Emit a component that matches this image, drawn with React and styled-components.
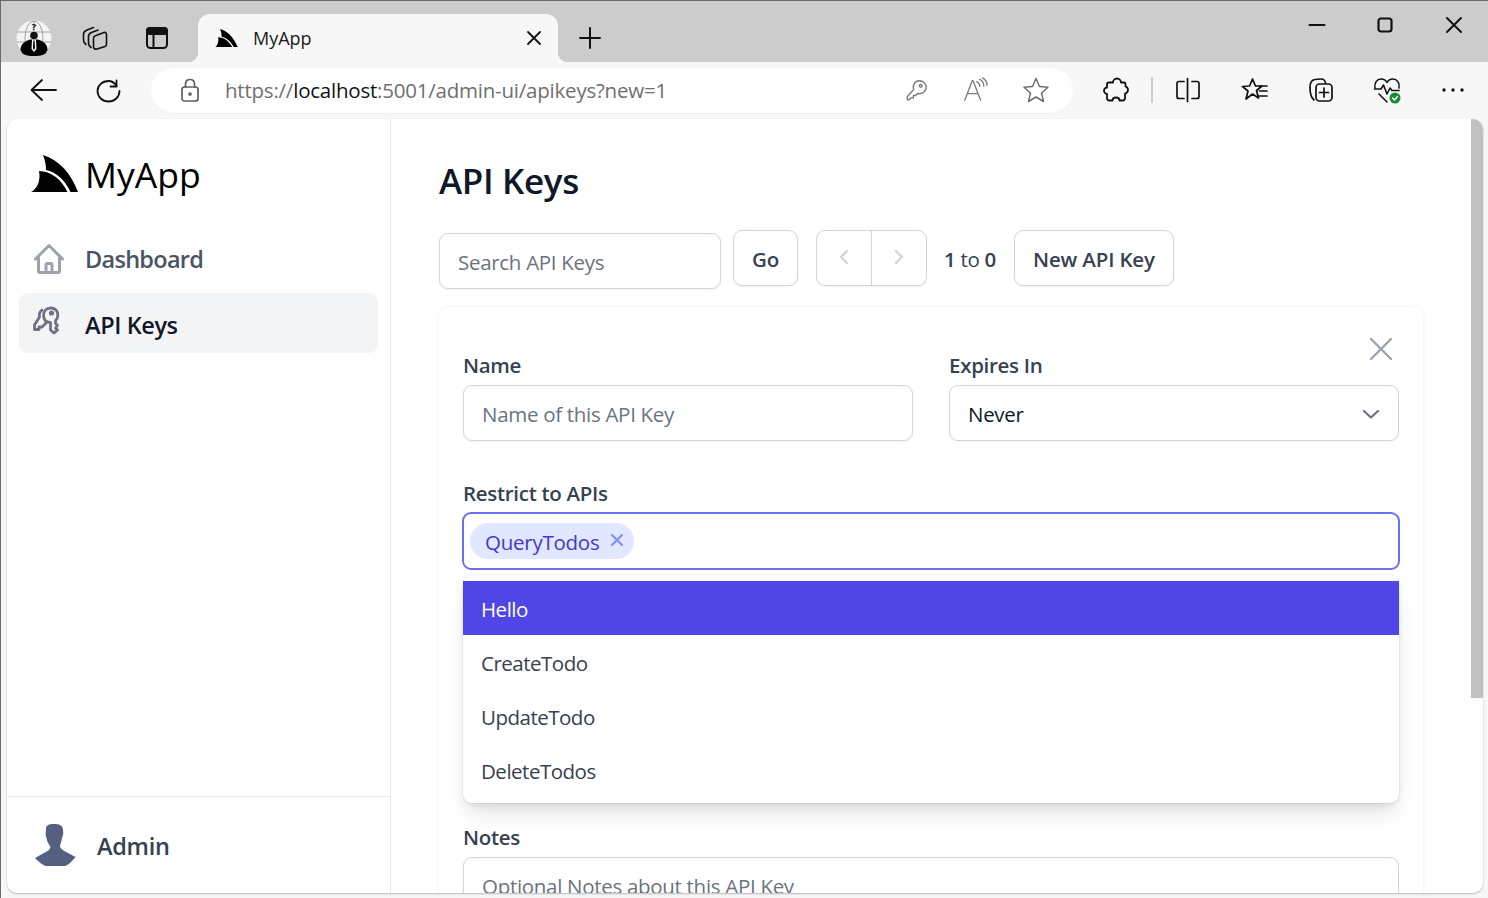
import styled, { createGlobalStyle } from "styled-components";
import { HiOutlineHome } from "react-icons/hi";

const GlobalStyle = createGlobalStyle`
  * { box-sizing: border-box; }
  html, body { margin: 0; padding: 0; overflow: hidden; }
  body { font-family: "Open Sans", "Noto Sans", "Liberation Sans", sans-serif; }
`;

const Window = styled.div`
  width: 1488px;
  height: 898px;
  display: flex;
  flex-direction: column;
  background: #f7f7f7;
  border-top: 1px solid #6b6b6b;
  border-left: 1px solid #6b6b6b;
  overflow: hidden;
`;

const TabStrip = styled.div`
  height: 61px;
  flex: none;
  display: flex;
  align-items: flex-end;
  padding-left: 1px;
  background: #cccccc;
`;

const StripButton = styled.div`
  width: ${(p) => p.$w || 63}px;
  height: 48px;
  flex: none;
  display: flex;
  align-items: center;
  justify-content: center;
`;

const Tab = styled.div`
  position: relative;
  width: 360px;
  height: 48px;
  margin-left: 8px;
  flex: none;
  display: flex;
  align-items: center;
  padding: 0 14px 0 16px;
  background: #f7f7f7;
  border-radius: 12px 12px 0 0;
  color: #1a1a1a;
  font-size: 18px;
  &::before {
    content: "";
    position: absolute;
    left: -10px;
    bottom: 0;
    width: 10px;
    height: 10px;
    background: radial-gradient(circle at 0 0, transparent 10px, #f7f7f7 10.5px);
  }
  &::after {
    content: "";
    position: absolute;
    right: -10px;
    bottom: 0;
    width: 10px;
    height: 10px;
    background: radial-gradient(circle at 100% 0, transparent 10px, #f7f7f7 10.5px);
  }
`;

const TabTitle = styled.span`
  flex: 1;
  margin-left: 15px;
`;

const WindowControls = styled.div`
  margin-left: auto;
  align-self: flex-start;
  display: flex;
`;

const WindowButton = styled.div`
  width: ${(p) => p.$w || 68}px;
  height: 48px;
  display: flex;
  align-items: center;
  justify-content: center;
`;

const NavBar = styled.div`
  height: 56px;
  flex: none;
  display: flex;
  align-items: center;
  padding-left: 9px;
`;

const NavButton = styled.div`
  width: 66px;
  height: 40px;
  margin-left: ${(p) => p.$ml || 0}px;
  flex: none;
  display: flex;
  align-items: center;
  justify-content: center;
`;

const AddressBar = styled.div`
  width: 922px;
  height: 45px;
  margin: 0 10px 0 9px;
  flex: none;
  display: flex;
  align-items: center;
  padding: 0 7px 0 26px;
  background: #ffffff;
  border-radius: 23px;
  box-shadow: 0 1px 1px rgba(0, 0, 0, 0.04);
`;

const Url = styled.div`
  flex: 1;
  margin-left: 22px;
  font-size: 20.5px;
  letter-spacing: -0.22px;
  color: #6f6f6f;
  white-space: nowrap;
  & b {
    font-weight: 400;
    color: #111111;
  }
`;

const AddressIcon = styled.div`
  width: 61px;
  padding-left: ${(p) => p.$pl || 0}px;
  display: flex;
  justify-content: center;
`;

const NavDivider = styled.div`
  width: 2px;
  height: 26px;
  margin: 0 2px;
  flex: none;
  background: #cfcfcf;
`;

const Viewport = styled.div`
  flex: 1;
  min-height: 0;
  margin: 1px 5px 5px 6px;
  display: flex;
  background: #ffffff;
  border-radius: 10px;
  box-shadow: 0 1px 2px rgba(0, 0, 0, 0.25);
  overflow: hidden;
`;

const Sidebar = styled.aside`
  width: 384px;
  flex: none;
  display: flex;
  flex-direction: column;
  border-right: 1px solid #e5e7eb;
`;

const Brand = styled.div`
  height: 110px;
  flex: none;
  display: flex;
  align-items: flex-start;
  padding: 36px 0 0 24px;
  color: #000000;
  font-size: 35.5px;
  line-height: 38px;
`;

const BrandName = styled.span`
  margin-left: 7px;
`;

const NavList = styled.nav`
  display: flex;
  flex-direction: column;
  gap: 4px;
  padding: 0 12px;
`;

const NavItem = styled.div`
  height: 60px;
  display: flex;
  align-items: center;
  padding: ${(p) => (p.$active ? "3px 0 0 12px" : "0 0 1px 12px")};
  border-radius: 9px;
  background: ${(p) => (p.$active ? "#f3f4f6" : "transparent")};
  color: ${(p) => (p.$active ? "#111827" : "#4b5563")};
  font-size: 23.5px;
  font-weight: 600;
  letter-spacing: ${(p) => (p.$active ? "-0.4px" : "-0.72px")};
  & svg {
    width: 36px;
    height: 36px;
    flex: none;
    margin-right: 18px;
    color: ${(p) => (p.$active ? "#6b7280" : "#9ca3af")};
  }
`;

const SidebarFooter = styled.div`
  margin-top: auto;
  height: 97px;
  flex: none;
  display: flex;
  align-items: center;
  padding-left: 28px;
  border-top: 1px solid #e5e7eb;
  color: #374151;
  font-size: 23.5px;
  font-weight: 600;
  letter-spacing: -0.3px;
`;

const FooterName = styled.span`
  margin: 2px 0 0 21px;
`;

const Main = styled.main`
  flex: 1;
  min-width: 0;
  padding: 36px 48px 0;
  overflow: hidden;
`;

const Title = styled.h1`
  margin: 0;
  height: 54px;
  color: #111827;
  font-size: 35px;
  font-weight: 600;
  letter-spacing: -0.35px;
  line-height: 52px;
`;

const Toolbar = styled.div`
  margin-top: 21px;
  display: flex;
  align-items: flex-start;
`;

const inputLook = `
  display: block;
  height: 56px;
  border: 1px solid #d1d5db;
  border-radius: 9px;
  background: #ffffff;
  box-shadow: 0 1px 2px rgba(0, 0, 0, 0.05);
  color: #111827;
  font-family: inherit;
  font-size: 20.5px;
  letter-spacing: -0.3px;
  outline: none;
  &::placeholder { color: #6b7280; opacity: 1; }
`;

const SearchInput = styled.input`
  ${inputLook}
  width: 282px;
  margin-top: 3px;
  padding: 1px 18px 0;
`;

const Button = styled.div`
  height: 56px;
  margin-left: ${(p) => p.$ml || 0}px;
  display: flex;
  align-items: center;
  padding: 2px 18px 0;
  border: 1px solid #d1d5db;
  border-radius: 9px;
  background: #ffffff;
  box-shadow: 0 1px 2px rgba(0, 0, 0, 0.05);
  color: #374151;
  font-size: 20.5px;
  font-weight: 600;
  letter-spacing: -0.15px;
`;

const Pager = styled.div`
  width: 111px;
  height: 56px;
  margin-left: 18px;
  display: flex;
  border: 1px solid #d1d5db;
  border-radius: 9px;
  box-shadow: 0 1px 2px rgba(0, 0, 0, 0.05);
`;

const PagerButton = styled.div`
  flex: 1;
  display: flex;
  align-items: center;
  justify-content: center;
  padding-bottom: 2px;
  color: #d1d5db;
  & + & {
    border-left: 1px solid #d1d5db;
  }
`;

const PageInfo = styled.div`
  height: 56px;
  margin-left: 17px;
  padding-top: 2px;
  display: flex;
  align-items: center;
  gap: 5px;
  color: #374151;
  font-size: 20.5px;
  letter-spacing: -0.3px;
  & b {
    font-weight: 600;
  }
`;

const Card = styled.section`
  position: relative;
  margin-top: 18px;
  height: 700px;
  padding: 44px 24px 0;
  border-radius: 9px;
  background: #ffffff;
  box-shadow: 0 0 4px rgba(0, 0, 0, 0.07);
`;

const CloseButton = styled.div`
  position: absolute;
  top: 27px;
  right: 27px;
  width: 30px;
  height: 30px;
  color: #9ca3af;
`;

const Row = styled.div`
  display: grid;
  grid-template-columns: 450px 450px;
  column-gap: 36px;
`;

const Field = styled.div`
  position: relative;
  margin-top: ${(p) => p.$mt || 0}px;
`;

const Label = styled.label`
  display: block;
  height: 30px;
  margin-bottom: ${(p) => p.$mb || 4}px;
  color: #374151;
  font-size: 20.5px;
  font-weight: 600;
  letter-spacing: -0.3px;
  line-height: 29px;
`;

const TextInput = styled.input`
  ${inputLook}
  width: 100%;
  padding: 1px 18px 0;
`;

const NotesInput = styled(TextInput)`
  height: 120px;
  padding-bottom: 64px;
`;

const SelectBox = styled.div`
  ${inputLook}
  display: flex;
  align-items: center;
  justify-content: space-between;
  padding: 2px 12px 0 18px;
  & svg {
    color: #6b7280;
  }
`;

const TagBox = styled.div`
  height: 58px;
  margin: 0 -1px;
  display: flex;
  align-items: center;
  padding: 0 6px;
  border: 2px solid #6d70ec;
  border-radius: 9px;
  background: #ffffff;
`;

const Tag = styled.span`
  height: 36px;
  display: flex;
  align-items: center;
  gap: 11px;
  padding: 2px 10px 0 15px;
  border-radius: 18px;
  background: #e0e7ff;
  color: #4338ca;
  font-size: 20.5px;
  letter-spacing: -0.25px;
  & svg {
    color: #818cf8;
    margin-bottom: 4px;
  }
`;

const Dropdown = styled.ul`
  position: absolute;
  top: 96px;
  left: 0;
  right: 0;
  z-index: 2;
  margin: 0;
  padding: 6px 0;
  list-style: none;
  border-radius: 9px;
  background: #ffffff;
  box-shadow: 0 15px 22px -4px rgba(0, 0, 0, 0.1), 0 4px 8px -2px rgba(0, 0, 0, 0.1), 0 0 0 1px rgba(0, 0, 0, 0.04);
`;

const Option = styled.li`
  height: 54px;
  display: flex;
  align-items: center;
  padding: 2px 0 0 18px;
  background: ${(p) => (p.$active ? "#4f46e5" : "transparent")};
  color: ${(p) => (p.$active ? "#ffffff" : "#374151")};
  font-size: 20.5px;
  letter-spacing: -0.5px;
`;

const ScrollTrack = styled.div`
  width: 12px;
  flex: none;
`;

const ScrollThumb = styled.div`
  height: 579px;
  background: #c1c1c1;
`;

// small line icons, all drawn on the same grid
const Line = ({ size = 30, color = "#111", sw = 1.6, children, box = 30 }) => (
  <svg width={size} height={size} viewBox={`0 0 ${box} ${box}`} fill="none" stroke={color} strokeWidth={sw} strokeLinecap="round" strokeLinejoin="round">
    {children}
  </svg>
);

const Fin = ({ width = 47 }) => (
  <svg width={width} height={(width * 37) / 47} viewBox="0 0 47 37" fill="#000">
    <path d="M12 0C28 5 40 18 47 37L39.5 37C34 25 25 17 15 15C15 10 14 5 12 0Z" />
    <path d="M8 16C20 16 31 25 36.5 37L0 37C6 34 10 26 8 16Z" />
  </svg>
);

const ProfileAvatar = () => (
  <svg width="36" height="36" viewBox="0 0 36 36">
    <circle cx="18" cy="18" r="17.5" fill="#f4f4f4" />
    <g fill="none" stroke="#9a9a9a" strokeWidth="0.9">
      <ellipse cx="18" cy="18" rx="9" ry="17" />
      <path d="M1 12H35M1 22H35M18 1V12" />
    </g>
    <path d="M4.500 30C4.500 24 9 21 14 19.500L22 19.500C27 21 31.500 24 31.500 30L29.500 33.500C24 37 12 37 6.500 33.500Z" fill="#000" />
    <circle cx="18" cy="15.500" r="3.800" fill="#111" />
    <path d="M16 19.500H20L20.500 29L18 32L15.500 29Z" fill="#f4f4f4" />
    <path d="M17.400 20.500H18.600L19 28L18 30L17 28Z" fill="#000" />
    <text x="18" y="10" fontSize="9" fontWeight="700" textAnchor="middle" fill="#000">?</text>
  </svg>
);

const ApiKeysIcon = () => (
  <svg viewBox="-2 -5 36 36" fill="none" stroke="currentColor" strokeWidth="2.8" strokeLinecap="round" strokeLinejoin="round" style={{ alignSelf: "flex-start", marginTop: 6 }}>
    <path d="M12.500 14C10 11 10 6 12 3.500C14.500 0.500 20 0 23 3C25.500 5.500 25.500 11 22.500 13.500V16.500L24.500 18.500L22.500 21L24.500 23L21 26L17.500 23V15.500C15.500 15.500 14 15 12.500 14Z" />
    <path d="M9 3C6.500 5 6 8 6.500 10L1.500 18V22.500H6V20H9L13 16" />
    <circle cx="18.500" cy="6" r="1.200" fill="currentColor" />
  </svg>
);

const AdminFigure = () => (
  <svg width="41" height="42" viewBox="0 0 41 42" fill="#556080">
    <path d="M11 5C11 1 14 0 18.500 0C24 0 28 1 28 6C28.500 10 28 12 27 14C26.500 18 25 20 25 23C26 25 29 27 33 29L40.500 33C38 36 34 41 30 42L11 42C7 41 3 37 0 34L9 29C12 27.500 15 26 15.500 23C14 20 12 18 11.500 14C10.500 12 10.500 8 11 5Z" />
  </svg>
);

export default function App() {
  return (
    <Window>
      <GlobalStyle />
      <TabStrip>
        <StripButton $w={64}><ProfileAvatar /></StripButton>
        <StripButton $w={58}>
          <Line size={28} box={28}>
            <path d="M15 11.500L23 8.500C24.500 8 25.500 9 25.500 10.500V20C25.500 21.500 25 22 24 22.500L16 25C14 25.500 12.500 24.500 12.500 23V14C12.500 13 13.500 12 15 11.500Z" />
            <path d="M17 6L10.500 8.500C8.500 9.300 7.500 10.500 7.500 12.500V19C7.500 21 8.500 22.500 10 23.500" />
            <path d="M12.500 3.500L6 6C4 6.800 2.500 8 2.500 10V16C2.500 18 3.500 19.500 5 20.500" />
          </Line>
        </StripButton>
        <StripButton $w={66}>
          <Line size={28} box={28} sw={2}>
            <rect x="4" y="4" width="20" height="20" rx="3.500" />
            <rect x="4" y="4" width="20" height="6" rx="2.500" fill="#111" />
            <path d="M10.500 10V24" />
          </Line>
        </StripButton>
        <Tab>
          <Fin width={24} />
          <TabTitle>MyApp</TabTitle>
          <Line size={20} box={20} sw={1.8}><path d="M4 4L16 16M16 4L4 16" /></Line>
        </Tab>
        <StripButton $w={64}>
          <Line size={26} box={26} sw={2}><path d="M13 3V23M3 13H23" /></Line>
        </StripButton>
        <WindowControls>
          <WindowButton><Line size={20} box={20} sw={2}><path d="M2.500 10H17.500" /></Line></WindowButton>
          <WindowButton><Line size={20} box={20} sw={2.200}><rect x="3.500" y="3.500" width="13" height="13" rx="2.500" /></Line></WindowButton>
          <WindowButton $w={69}><Line size={20} box={20} sw={2}><path d="M3 3L17 17M17 3L3 17" /></Line></WindowButton>
        </WindowControls>
      </TabStrip>

      <NavBar>
        <NavButton>
          <Line size={30} sw={1.800}><path d="M28 15H4M14 5L3.500 15L14 25" /></Line>
        </NavButton>
        <NavButton>
          <Line size={30} sw={1.800}>
            <path d="M22.500 5.500V11.500H16.500" />
            <path d="M22.500 11C20.500 7.800 17.500 6 14.500 6C8.500 6 3.500 10.500 3.500 16C3.500 22 8.500 26.500 14.500 26.500C20.500 26.500 25.500 22 25.500 16" />
          </Line>
        </NavButton>
        <AddressBar>
          <Line size={26} box={26} color="#5f5f5f" sw={1.700}>
            <rect x="5" y="10" width="16" height="14" rx="2.500" />
            <path d="M8.500 10V7C8.500 4 10.500 2.500 13 2.500C15.500 2.500 17.500 4 17.500 7V10" />
            <circle cx="13" cy="17" r="1" fill="#5f5f5f" />
          </Line>
          <Url>https://<b>localhost</b>:5001/admin-ui/apikeys?new=1</Url>
          <AddressIcon $pl={6}>
            <Line size={24} box={26} color="#7a7a7a" sw={1.500}>
              <path d="M15.500 3C19.500 3 23 6.500 23 10C23 14 19.500 17 15.500 17C14.800 17 14.200 17 13.500 16.800L11.500 19H9V21.500H6.500L4.500 23.500H2.500V20L9.500 12.500C9.200 11.700 9 11 9 10C9 6.500 11.500 3 15.500 3Z" />
              <circle cx="17" cy="8.500" r="1.500" />
            </Line>
          </AddressIcon>
          <AddressIcon>
            <Line size={26} box={28} color="#7a7a7a" sw={1.400}>
              <path d="M3 25L11 4H12L20 25M6 18H17" />
              <path d="M16 5C18 6 19 8 19 10M19 2.500C22 4 23.500 7 23.500 10M22 1C25 2.500 27 6 27 9" />
            </Line>
          </AddressIcon>
          <AddressIcon>
            <Line size={28} box={28} color="#6f6f6f" sw={1.500}>
              <path d="M14 2.500L17.500 10.500L26 11.200L19.500 17L21.500 25.500L14 21L6.500 25.500L8.500 17L2 11.200L10.500 10.500Z" />
            </Line>
          </AddressIcon>
        </AddressBar>
        <NavButton>
          <Line size={26} box={26} sw={1.800}>
            <path d="M10 5.500C10 3.500 11.500 1.500 14 1.500C16.500 1.500 18 3.500 18 5.500H21C22 5.500 22.500 6 22.500 7V9.500C24.500 10 25 11.500 25 13C25 14.500 24 16 22 16.500V21C22 22.500 21 23.500 19.500 23.500H16.500C16.500 21.500 15 20.500 13 20.500C11 20.500 9.500 21.500 9.500 23.500H6C4.500 23.500 4 22.500 4 21V17C2 17 1 15 1 13.500C1 12 2.500 10.500 4 10.500V7C4 6 4.500 5.500 5.500 5.500Z" />
          </Line>
        </NavButton>
        <NavDivider />
        <NavButton>
          <Line size={26} box={26} sw={1.700}>
            <path d="M9 4.500H4C2.800 4.500 2 5.300 2 6.500V19.500C2 20.700 2.800 21.500 4 21.500H9" />
            <path d="M17 4.500H22C23.200 4.500 24 5.300 24 6.500V19.500C24 20.700 23.200 21.500 22 21.500H17" />
            <path d="M12.500 1.500V24.500" />
          </Line>
        </NavButton>
        <NavButton $ml={1}>
          <Line size={28} box={28} sw={1.700}>
            <path d="M11.500 3L14.500 10H21L15.500 14.500L17.500 22L11.500 18L5 23L7 15L1.500 10.500L8.500 10Z" />
            <path d="M18.500 10H26M18.500 15H26M17.500 20H26" />
          </Line>
        </NavButton>
        <NavButton>
          <Line size={28} box={28} sw={1.700}>
            <path d="M7 24C4.500 22 3 18 3 11.500C3 7 4.500 4 8 3.500L14 3C16.500 2.800 18 4.500 18.500 7" />
            <rect x="9" y="8" width="16" height="17" rx="3.500" />
            <path d="M17 12V21M12.500 16.500H21.500" />
          </Line>
        </NavButton>
        <NavButton>
          <svg width="28" height="28" viewBox="0 0 28 28" fill="none" stroke="#111" strokeWidth="1.600" strokeLinecap="round" strokeLinejoin="round">
            <path d="M2 12C1 7 4 3 8 3C10.500 3 13 4.500 14 6.500C15 4.500 17.500 3 20 3C24 3 27 7 26 12" />
            <path d="M1.500 13H8L10.500 9L14 18L17 12L19 14.500H26" />
            <path d="M6 18L14 26" />
            <circle cx="22" cy="22" r="5.500" fill="#1b8a35" stroke="none" />
            <path d="M19.500 22L21.500 24L24.500 20.500" stroke="#fff" strokeWidth="1.400" />
          </svg>
        </NavButton>
        <NavButton>
          <svg width="24" height="6" viewBox="0 0 24 6" fill="#111">
            <circle cx="3" cy="3" r="1.700" /><circle cx="12" cy="3" r="1.700" /><circle cx="21" cy="3" r="1.700" />
          </svg>
        </NavButton>
      </NavBar>

      <Viewport>
        <Sidebar>
          <Brand>
            <Fin />
            <BrandName>MyApp</BrandName>
          </Brand>
          <NavList>
            <NavItem><HiOutlineHome />Dashboard</NavItem>
            <NavItem $active><ApiKeysIcon />API Keys</NavItem>
          </NavList>
          <SidebarFooter>
            <AdminFigure />
            <FooterName>Admin</FooterName>
          </SidebarFooter>
        </Sidebar>

        <Main>
          <Title>API Keys</Title>
          <Toolbar>
            <SearchInput placeholder="Search API Keys" readOnly />
            <Button $ml={12}>Go</Button>
            <Pager>
              <PagerButton>
                <Line size={24} box={24} color="currentColor" sw={2.400}><path d="M15 6L9 12L15 18" /></Line>
              </PagerButton>
              <PagerButton>
                <Line size={24} box={24} color="currentColor" sw={2.400}><path d="M9 6L15 12L9 18" /></Line>
              </PagerButton>
            </Pager>
            <PageInfo><b>1</b>to<b>0</b></PageInfo>
            <Button $ml={18}>New API Key</Button>
          </Toolbar>

          <Card>
            <CloseButton>
              <Line color="currentColor" sw={2.400}><path d="M5 5L25 25M25 5L5 25" /></Line>
            </CloseButton>
            <Row>
              <Field>
                <Label>Name</Label>
                <TextInput placeholder="Name of this API Key" readOnly />
              </Field>
              <Field>
                <Label>Expires In</Label>
                <SelectBox>
                  Never
                  <Line size={30} color="currentColor" sw={2.200}><path d="M8 12L15 18.500L22 12" /></Line>
                </SelectBox>
              </Field>
            </Row>
            <Field $mt={38}>
              <Label $mb={3}>Restrict to APIs</Label>
              <TagBox>
                <Tag>
                  QueryTodos
                  <Line size={14} box={14} color="currentColor" sw={2}><path d="M2 2L12 12M12 2L2 12" /></Line>
                </Tag>
              </TagBox>
              <Dropdown>
                <Option $active>Hello</Option>
                <Option>CreateTodo</Option>
                <Option>UpdateTodo</Option>
                <Option>DeleteTodos</Option>
              </Dropdown>
            </Field>
            <Field $mt={253}>
              <Label>Notes</Label>
              <NotesInput placeholder="Optional Notes about this API Key" readOnly />
            </Field>
          </Card>
        </Main>

        <ScrollTrack><ScrollThumb /></ScrollTrack>
      </Viewport>
    </Window>
  );
}
